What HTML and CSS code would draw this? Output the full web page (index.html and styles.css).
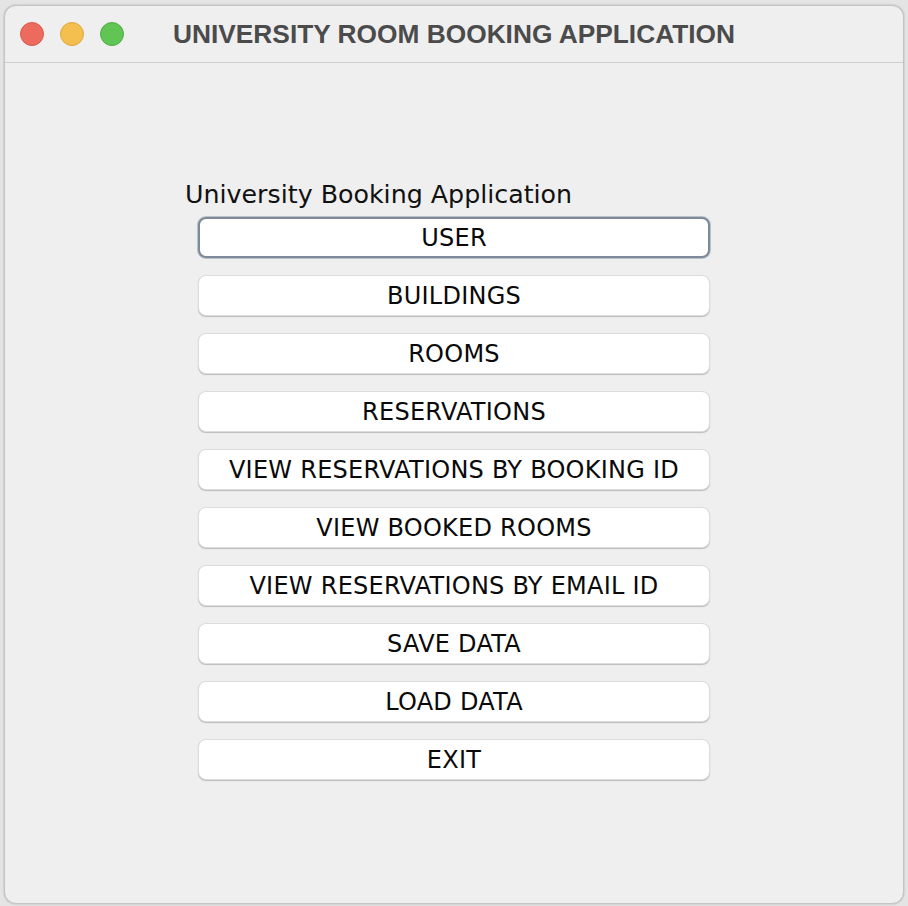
FILE: index.html
```html
<!DOCTYPE html>
<html lang="en">
<head>
  <meta charset="UTF-8">
  <title>University Room Booking Application</title>
  <link rel="stylesheet" href="styles.css">
</head>
<body>

  <div class="window">
    <div class="titlebar">
      <div class="lights">
        <span class="light red"></span>
        <span class="light yellow"></span>
        <span class="light green"></span>
      </div>
      <div class="title">UNIVERSITY ROOM BOOKING APPLICATION</div>
    </div>

    <div class="panel">
      <div class="heading">University Booking Application</div>
      <div class="menu">
        <button class="menu-btn focused">USER</button>
        <button class="menu-btn">BUILDINGS</button>
        <button class="menu-btn">ROOMS</button>
        <button class="menu-btn">RESERVATIONS</button>
        <button class="menu-btn">VIEW RESERVATIONS BY BOOKING ID</button>
        <button class="menu-btn">VIEW BOOKED ROOMS</button>
        <button class="menu-btn">VIEW RESERVATIONS BY EMAIL ID</button>
        <button class="menu-btn">SAVE DATA</button>
        <button class="menu-btn">LOAD DATA</button>
        <button class="menu-btn">EXIT</button>
      </div>
    </div>
  </div>

</body>
</html>
```

FILE: styles.css
```css
html, body { margin: 0; height: 100%; }
body { background-color: #e4e4e4; padding: 5px 4px 0 4px; box-sizing: border-box; overflow: hidden; }

.window {
  width: 900px; height: 899px; box-sizing: border-box;
  background-color: #efefef; border: 1px solid #c4c4c4; border-radius: 12px;
  box-shadow: 0 0 2px rgba(0,0,0,0.25);
}

.titlebar {
  height: 56px; border-bottom: 1px solid #cfcfcf;
  display: flex; align-items: center; position: relative;
}
.lights { display: flex; gap: 16px; padding-left: 15px; }
.light { width: 24px; height: 24px; border-radius: 50%; box-sizing: border-box; }
.red { background-color: #ec6a5e; border: 1px solid #d65a4f; }
.yellow { background-color: #f4bf4f; border: 1px solid #dea73f; }
.green { background-color: #61c554; border: 1px solid #52ad45; }
.title {
  position: absolute; left: 0; right: 0; text-align: center;
  font-family: "Liberation Sans", Arial, sans-serif; font-weight: bold;
  font-size: 26.3px; color: #4b4b4b;
}

.panel { padding: 117px 0 0 180px; font-family: "DejaVu Sans", sans-serif; }
.heading { font-size: 25.3px; color: #111; line-height: 29px; }
.menu { display: flex; flex-direction: column; gap: 17px; padding-left: 13px; margin-top: 8px; }
.menu-btn {
  width: 512px; height: 41px; box-sizing: border-box;
  background-color: #fff; border: 1px solid #dcdcdc; border-radius: 8px;
  box-shadow: 0 1px 1px rgba(0,0,0,0.22);
  font-family: "DejaVu Sans", sans-serif; font-size: 24px; letter-spacing: 0.25px; color: #0a0a0a;
  padding: 0; cursor: pointer;
}
.menu-btn.focused { border: 2px solid #7d8a99; box-shadow: 0 0 0 1px rgba(125,138,153,0.45); }
```
